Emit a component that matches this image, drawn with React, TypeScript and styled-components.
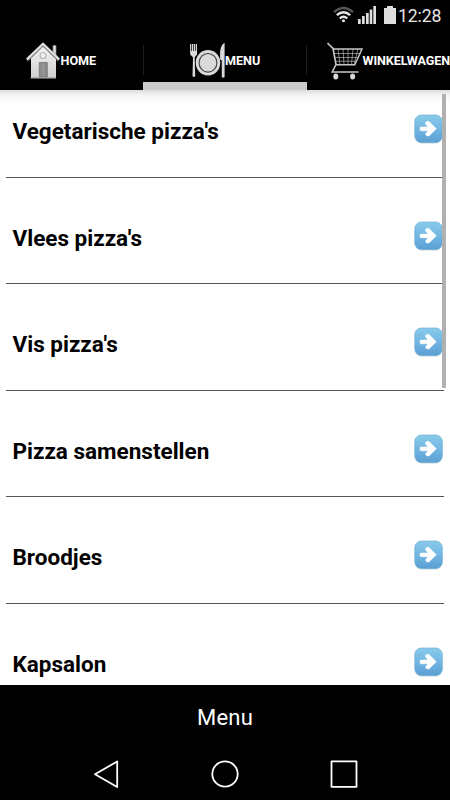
import React from "react";
import styled, { createGlobalStyle } from "styled-components";

const GlobalStyle = createGlobalStyle`
  * { box-sizing: border-box; }
  body { margin: 0; background: #000; font-family: Roboto, "Liberation Sans", sans-serif; }
`;

const Screen = styled.div`
  width: 450px;
  height: 800px;
  display: flex;
  flex-direction: column;
  overflow: hidden;
  background: #000;
  color: #fff;
`;

const StatusBar = styled.header`
  height: 32px;
  flex: none;
  display: flex;
  align-items: center;
  justify-content: flex-end;
  padding-right: 8px;
`;

const StatusIcons = styled.svg`
  display: block;
  margin-right: 1px;
`;

const Clock = styled.span`
  font-size: 17.7px;
  line-height: 32px;
  color: #e6e6e6;
  width: 44px;
  letter-spacing: -0.15px;
  white-space: nowrap;
`;

const Tabs = styled.nav`
  height: 58px;
  flex: none;
  display: grid;
  grid-template-columns: 143px 164px 143px;
`;

const Tab = styled.div<{ $active?: boolean; $start: number }>`
  display: flex;
  align-items: flex-start;
  padding: 10px 0 0 ${(p) => p.$start}px;
  border-bottom: ${(p) => (p.$active ? "8px solid #cbcbcb" : "0")};
  background: ${(p) =>
    p.$active
      ? "linear-gradient(#1e1e1e, #1e1e1e) 0 13px / 1px 30px no-repeat, linear-gradient(#1e1e1e, #1e1e1e) 100% 13px / 1px 30px no-repeat"
      : "none"};
`;

const TabLabel = styled.span<{ $tight?: boolean }>`
  font-size: 12.6px;
  font-weight: 700;
  line-height: 16px;
  margin-top: 11px;
  margin-left: ${(p) => (p.$tight ? "-0.5px" : "0")};
  letter-spacing: ${(p) => (p.$tight ? "-0.08px" : "0")};
  white-space: nowrap;
`;

const TabIcon = styled.svg`
  display: block;
  flex: none;
`;

const Content = styled.main`
  position: relative;
  height: 595px;
  flex: none;
  overflow: hidden;
  padding: 0 6px;
  color: #000;
  background: linear-gradient(#dcdcdc, #f3f3f3 5px, #fbfbfb 9px, #fff 16px) #fff;
`;

const Row = styled.div<{ $height: number }>`
  height: ${(p) => p.$height}px;
  display: flex;
  align-items: flex-end;
  justify-content: space-between;
  padding: 0 0 ${(p) => (p.$height === 106 ? 32 : 33)}px 6.5px;
  border-bottom: 1px solid #555;
`;

const RowTitle = styled.span`
  font-size: 22.5px;
  font-weight: 700;
  line-height: 26px;
  white-space: nowrap;
`;

const ArrowIcon = styled.svg`
  display: block;
  margin-right: 1px;
`;

const Scrollbar = styled.div`
  position: absolute;
  right: 4px;
  top: 4px;
  width: 4px;
  height: 294px;
  background: #b0b0b0;
`;

const Footer = styled.footer`
  height: 62px;
  flex: none;
  text-align: center;
  font-size: 22px;
  line-height: 65px;
  letter-spacing: 0.2px;
`;

const NavBar = styled.div`
  height: 53px;
  flex: none;
`;

const HomeIcon = () => (
  <TabIcon width="35" height="38" viewBox="0 0 35 38">
    <defs>
      <linearGradient id="wall" x1="0" y1="0" x2="0" y2="1">
        <stop offset="0" stopColor="#f4f4f4" />
        <stop offset="1" stopColor="#cfcfcf" />
      </linearGradient>
    </defs>
    <path d="M27 3.5h3v10l-3-3z" fill="#ddd" stroke="#888" strokeWidth=".7" />
    <path d="M5 16 17 4 30 16v20H5z" fill="url(#wall)" />
    <path d="M1 18 17 2.500 33 18" fill="none" stroke="#888" strokeWidth="3.400" />
    <path d="M1 17.200 17 1.800 33 17.200" fill="none" stroke="#e2e2e2" strokeWidth="2" />
    <circle cx="17" cy="13.500" r="3" fill="#f0f0f0" stroke="#b5b5b5" strokeWidth="1.200" />
    <path d="M13.300 20.500h8V35h-8z" fill="#8c8c8c" stroke="#747474" strokeWidth=".8" />
    <path d="M17.300 21v13.500" stroke="#a2a2a2" />
    <path d="M4.500 36H30" stroke="#999" strokeWidth="1.200" />
  </TabIcon>
);

const PlateIcon = () => (
  <TabIcon width="36" height="38" viewBox="0 0 36 38">
    <g fill="#dadada">
      <path d="M1 2h1.200v7h.7V2h1.300v7h.7V2h1.200v7h.7V2H8v10.500L5.700 15.300 6.200 34q-1.400 2-2.700 0L4 15.300 1.200 12.500z" />
      <path d="M35.600.8V35q-1.500 1.300-2.800 0V18.500l-1.700-1V9.200Q32 2.600 35.600.8z" />
      <ellipse cx="19" cy="20.800" rx="12.300" ry="12.800" />
    </g>
    <ellipse cx="19" cy="20.800" rx="8.900" ry="9.300" fill="none" stroke="#444" strokeWidth="1.100" />
  </TabIcon>
);

const CartIcon = () => (
  <TabIcon width="36" height="38" viewBox="0 0 36 38">
    <g fill="none" stroke="#c8c8c8">
      <path d="M.5 1 6 6.500 9 22.500 5.200 30H31.500" strokeWidth="1.600" />
      <path d="M6 7H35L27.800 22.700H9" strokeWidth="1.400" />
      <path d="M7 11.500H33M8 15.500H31M9 19.200H29.500M11 7l2 15.500M16 7l1 15.500M21 7v15.500M26 7l-1.500 15.500M31 7l-4 15.500" strokeWidth=".9" opacity=".7" />
    </g>
    <g fill="#d9d9d9">
      <ellipse cx="8.800" cy="34.500" rx="2.500" ry="2.900" />
      <ellipse cx="25.600" cy="34.500" rx="2.500" ry="2.900" />
    </g>
  </TabIcon>
);

const Arrow = () => (
  <ArrowIcon width="29" height="30" viewBox="0 0 29 30">
    <defs>
      <linearGradient id="tile" x1="0" y1="0" x2="0" y2="1">
        <stop offset="0" stopColor="#88cbea" />
        <stop offset=".5" stopColor="#73b7e3" />
        <stop offset="1" stopColor="#5a9fd3" />
      </linearGradient>
    </defs>
    <rect x=".8" y="1.500" width="27.500" height="28" rx="7" fill="#a9b9c6" opacity=".6" />
    <rect x=".8" y="1" width="27.500" height="27.500" rx="6.500" fill="url(#tile)" stroke="#70afd6" strokeWidth=".7" />
    <path d="M6.500 13h7.500L11.500 9.800q-.5-2.700 3.300-2.500L22.300 14.800 15 22q-3.500.5-3.300-2.300L14 16.800H6.500q-1.200-1.900 0-3.800z" fill="#fff" stroke="#fff" strokeWidth=".5" />
  </ArrowIcon>
);

const items = [
  { name: "Vegetarische pizza's", height: 88 },
  { name: "Vlees pizza's", height: 106 },
  { name: "Vis pizza's", height: 107 },
  { name: "Pizza samenstellen", height: 106 },
  { name: "Broodjes", height: 107 },
  { name: "Kapsalon", height: 106 },
];

export default function App() {
  return (
    <>
      <GlobalStyle />
      <Screen>
        <StatusBar>
          <StatusIcons width="64" height="32" viewBox="0 0 64 32">
            <g fill="none" strokeWidth="2.300">
              <path d="M1 12.200q9.500-8.500 19 0" stroke="#555" />
              <path d="M3.800 15.200q6.700-6 13.400 0" stroke="#e6e6e6" />
              <path d="M6.800 18.300q3.700-3.200 7.400 0" stroke="#e6e6e6" />
            </g>
            <circle cx="10.500" cy="20.800" r="1.500" fill="#e6e6e6" />
            <g fill="#dedede">
              <path d="M25 19h2.700v5H25zM29 16h2.700v8H29zM33 13h2.700v11H33zM36.700 9.500h2.600V24h-2.600zM40.300 6H43v18h-2.700z" />
              <path d="M54 6h6v2h3v16H51V8h3z" />
            </g>
          </StatusIcons>
          <Clock>12:28</Clock>
        </StatusBar>
        <Tabs>
          <Tab $start={25.5}>
            <HomeIcon />
            <TabLabel>HOME</TabLabel>
          </Tab>
          <Tab $active $start={46}>
            <PlateIcon />
            <TabLabel>MENU</TabLabel>
          </Tab>
          <Tab $start={20}>
            <CartIcon />
            <TabLabel $tight>WINKELWAGEN</TabLabel>
          </Tab>
        </Tabs>
        <Content>
          {items.map(({ name, height }) => (
            <Row key={name} $height={height}>
              <RowTitle>{name}</RowTitle>
              <Arrow />
            </Row>
          ))}
          <Scrollbar />
        </Content>
        <Footer>Menu</Footer>
        <NavBar>
          <svg width="450" height="53" viewBox="0 0 450 53" fill="none" stroke="#fff" strokeWidth="1.800" strokeLinejoin="round">
            <path d="M117.200 14.500v25.500L95 27.200z" />
            <circle cx="225" cy="27" r="12.700" />
            <rect x="331.500" y="14.300" width="25" height="25.500" />
          </svg>
        </NavBar>
      </Screen>
    </>
  );
}
